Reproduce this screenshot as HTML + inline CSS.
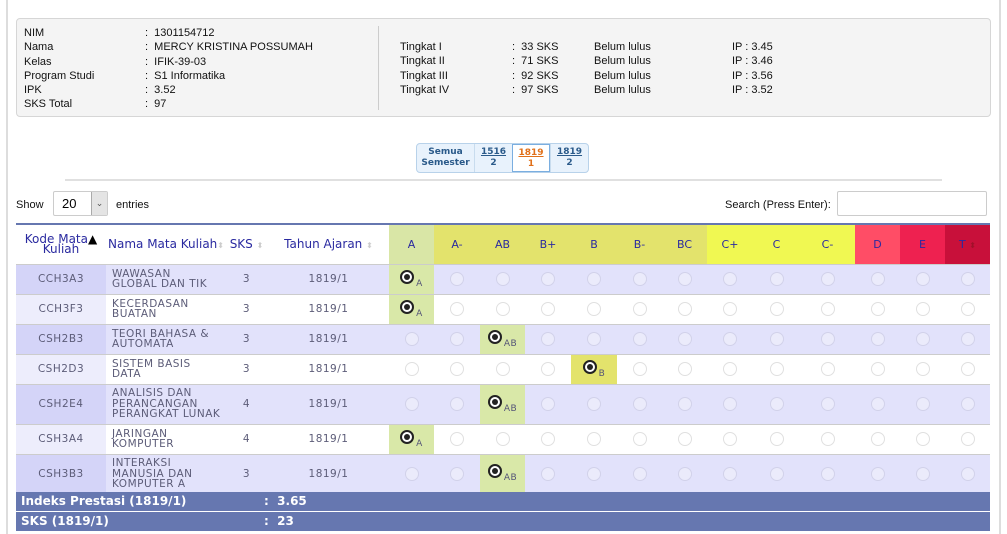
<!DOCTYPE html>
<html><head><meta charset="utf-8"><style>
*{margin:0;padding:0;box-sizing:border-box}
body{width:1007px;height:534px;background:#fff;position:relative;overflow:hidden;font-family:"Liberation Sans",Arial,sans-serif}
.vl{position:absolute;top:0;width:2px;height:534px;background:#ddd}
.info{position:absolute;left:16px;top:18px;width:975px;height:99px;background:#f4f4f4;border:1px solid #d6d6d6;border-radius:4px}
.t{position:absolute;font-size:11px;color:#111;line-height:14.3px;white-space:nowrap}
.sep{position:absolute;left:378px;top:26px;width:1px;height:84px;background:#ccc}
.tabs{position:absolute;left:416px;top:143px;height:30px;display:flex;border:1px solid #b8d2ea;border-radius:4px;background:#e8f2fc;font-family:"DejaVu Sans",Verdana,sans-serif;font-size:9px;font-weight:bold;color:#2a5a8a;text-align:center;line-height:11px}
.tabs div{padding:3px 0;border-left:1px solid #c8dcee}
.tabs div:first-child{border-left:none}
.hr{position:absolute;left:65px;top:179px;width:877px;height:2px;background:#e0e0e0}
.ctl{position:absolute;font-size:11px;color:#111}
table{position:absolute;left:16px;top:223px;width:974px;border-collapse:collapse;table-layout:fixed;font-family:"DejaVu Sans",Verdana,sans-serif}
thead th{height:40px;font-weight:normal;font-size:11px;color:#2a2aa0;border-top:2px solid #6677b0;text-align:center}
thead th.b{font-size:12px}
td{font-size:10.5px;color:#5c5c78;text-align:center;border-top:1px solid #ccc;letter-spacing:.5px;padding:0}
td.n{text-align:left;padding-left:6px;line-height:10.5px}
tr.o td{background:#e2e2fb}
tr.o td.k{background:#d4d4f8}
tr.e td{background:#fff}
tr.e td.k{background:#ededfc}
tr td.sa{background:#d9e8a8!important}
tr td.sb{background:#e3e36c!important}
.r{display:inline-block;width:14px;height:14px;border-radius:50%;background:#ebebfb;border:1px solid #d2d2ea;vertical-align:middle}
tr.e .r{background:#fff;border-color:#e0e0e0}
.s{display:inline-block;width:14px;height:14px;border-radius:50%;background:#fff;border:2px solid #222;vertical-align:middle;position:relative}
.s:after{content:"";position:absolute;left:2px;top:2px;width:6px;height:6px;border-radius:50%;background:#222}
.g{font-size:9px;color:#557;vertical-align:-6px;margin-left:2px}
.foot{position:absolute;left:16px;width:974px;height:19px;background:#6677b0;color:#fff;font-family:"DejaVu Sans",Verdana,sans-serif;font-weight:bold;font-size:12px;line-height:19px}
.foot span{position:absolute}
.arr{color:#ccc;font-size:8px}
</style></head><body>
<div class="vl" style="left:6px"></div><div class="vl" style="left:999px"></div>
<div class="info"></div>
<div class="t" style="left:24px;top:26px">NIM<br>Nama<br>Kelas<br>Program Studi<br>IPK<br>SKS Total</div>
<div class="t" style="left:145px;top:26px">:&nbsp; 1301154712<br>:&nbsp; MERCY KRISTINA POSSUMAH<br>:&nbsp; IFIK-39-03<br>:&nbsp; S1 Informatika<br>:&nbsp; 3.52<br>:&nbsp; 97</div>
<div class="sep"></div>
<div class="t" style="left:400px;top:40px">Tingkat I<br>Tingkat II<br>Tingkat III<br>Tingkat IV</div>
<div class="t" style="left:512px;top:40px">:&nbsp; 33 SKS<br>:&nbsp; 71 SKS<br>:&nbsp; 92 SKS<br>:&nbsp; 97 SKS</div>
<div class="t" style="left:594px;top:40px">Belum lulus<br>Belum lulus<br>Belum lulus<br>Belum lulus</div>
<div class="t" style="left:732px;top:40px">IP : 3.45<br>IP : 3.46<br>IP : 3.56<br>IP : 3.52</div>
<div class="tabs">
<div style="width:57px">Semua<br>Semester</div>
<div style="width:38px"><u>1516</u><br>2</div>
<div style="width:38px;background:#fff;border:1px solid #7aaee0;color:#e0701a"><u>1819</u><br>1</div>
<div style="width:38px"><u>1819</u><br>2</div>
</div>
<div class="hr"></div>
<div class="ctl" style="left:16px;top:199px">Show</div>
<div style="position:absolute;left:53px;top:191px;width:55px;height:25px;border:1px solid #ccc;border-radius:2px;font-size:13px;line-height:23px;padding-left:8px">20<span style="position:absolute;right:0;top:0;width:16px;height:23px;background:#e4e4e4;border-left:1px solid #aaa;font-size:9px;text-align:center;color:#555">&#8964;</span></div>
<div class="ctl" style="left:116px;top:199px">entries</div>
<div class="ctl" style="left:725px;top:199px">Search (Press Enter):</div>
<div style="position:absolute;left:837px;top:191px;width:150px;height:25px;border:1px solid #ccc;border-radius:2px"></div>
<table>
<colgroup><col style="width:90px"><col style="width:119px"><col style="width:43px"><col style="width:121px"><col style="width:45px"><col style="width:46px"><col style="width:45px"><col style="width:46px"><col style="width:46px"><col style="width:45px"><col style="width:45px"><col style="width:46px"><col style="width:47px"><col style="width:55px"><col style="width:45px"><col style="width:45px"><col style="width:45px"></colgroup>
<thead><tr>
<th class="b" style="line-height:10px">Kode Mata<span style="color:#000">▲</span><br>Kuliah</th>
<th class="b" style="text-align:left;padding-left:2px">Nama Mata Kuliah<span class="arr">⬍</span></th>
<th class="b">SKS <span class="arr">⬍</span></th>
<th class="b">Tahun Ajaran <span class="arr">⬍</span></th>
<th style="background:#d9e6a6">A</th><th style="background:#e3e36c">A-</th><th style="background:#e3e36c">AB</th><th style="background:#e3e36c">B+</th><th style="background:#e3e36c">B</th><th style="background:#e3e36c">B-</th><th style="background:#e3e36c">BC</th>
<th style="background:#f0f852">C+</th><th style="background:#f0f852">C</th><th style="background:#f0f852">C-</th>
<th style="background:#ff4d66">D</th><th style="background:#ee2150">E</th><th style="background:#c8103a">T <span style="color:#a0102a;font-size:8px">⬍</span></th>
</tr></thead>
<tbody>
<tr class="o" style="height:30px"><td class="k">CCH3A3</td><td class="n">WAWASAN<br>GLOBAL DAN TIK</td><td>3</td><td>1819/1</td><td class="sa"><span class="s"></span><span class="g">A</span></td><td><span class="r"></span></td><td><span class="r"></span></td><td><span class="r"></span></td><td><span class="r"></span></td><td><span class="r"></span></td><td><span class="r"></span></td><td><span class="r"></span></td><td><span class="r"></span></td><td><span class="r"></span></td><td><span class="r"></span></td><td><span class="r"></span></td><td><span class="r"></span></td></tr>
<tr class="e" style="height:30px"><td class="k">CCH3F3</td><td class="n">KECERDASAN<br>BUATAN</td><td>3</td><td>1819/1</td><td class="sa"><span class="s"></span><span class="g">A</span></td><td><span class="r"></span></td><td><span class="r"></span></td><td><span class="r"></span></td><td><span class="r"></span></td><td><span class="r"></span></td><td><span class="r"></span></td><td><span class="r"></span></td><td><span class="r"></span></td><td><span class="r"></span></td><td><span class="r"></span></td><td><span class="r"></span></td><td><span class="r"></span></td></tr>
<tr class="o" style="height:30px"><td class="k">CSH2B3</td><td class="n">TEORI BAHASA &amp;<br>AUTOMATA</td><td>3</td><td>1819/1</td><td><span class="r"></span></td><td><span class="r"></span></td><td class="sa"><span class="s"></span><span class="g">AB</span></td><td><span class="r"></span></td><td><span class="r"></span></td><td><span class="r"></span></td><td><span class="r"></span></td><td><span class="r"></span></td><td><span class="r"></span></td><td><span class="r"></span></td><td><span class="r"></span></td><td><span class="r"></span></td><td><span class="r"></span></td></tr>
<tr class="e" style="height:30px"><td class="k">CSH2D3</td><td class="n">SISTEM BASIS<br>DATA</td><td>3</td><td>1819/1</td><td><span class="r"></span></td><td><span class="r"></span></td><td><span class="r"></span></td><td><span class="r"></span></td><td class="sb"><span class="s"></span><span class="g">B</span></td><td><span class="r"></span></td><td><span class="r"></span></td><td><span class="r"></span></td><td><span class="r"></span></td><td><span class="r"></span></td><td><span class="r"></span></td><td><span class="r"></span></td><td><span class="r"></span></td></tr>
<tr class="o" style="height:40px"><td class="k">CSH2E4</td><td class="n">ANALISIS DAN<br>PERANCANGAN<br>PERANGKAT LUNAK</td><td>4</td><td>1819/1</td><td><span class="r"></span></td><td><span class="r"></span></td><td class="sa"><span class="s"></span><span class="g">AB</span></td><td><span class="r"></span></td><td><span class="r"></span></td><td><span class="r"></span></td><td><span class="r"></span></td><td><span class="r"></span></td><td><span class="r"></span></td><td><span class="r"></span></td><td><span class="r"></span></td><td><span class="r"></span></td><td><span class="r"></span></td></tr>
<tr class="e" style="height:30px"><td class="k">CSH3A4</td><td class="n">JARINGAN<br>KOMPUTER</td><td>4</td><td>1819/1</td><td class="sa"><span class="s"></span><span class="g">A</span></td><td><span class="r"></span></td><td><span class="r"></span></td><td><span class="r"></span></td><td><span class="r"></span></td><td><span class="r"></span></td><td><span class="r"></span></td><td><span class="r"></span></td><td><span class="r"></span></td><td><span class="r"></span></td><td><span class="r"></span></td><td><span class="r"></span></td><td><span class="r"></span></td></tr>
<tr class="o" style="height:39px"><td class="k">CSH3B3</td><td class="n">INTERAKSI<br>MANUSIA DAN<br>KOMPUTER A</td><td>3</td><td>1819/1</td><td><span class="r"></span></td><td><span class="r"></span></td><td class="sa"><span class="s"></span><span class="g">AB</span></td><td><span class="r"></span></td><td><span class="r"></span></td><td><span class="r"></span></td><td><span class="r"></span></td><td><span class="r"></span></td><td><span class="r"></span></td><td><span class="r"></span></td><td><span class="r"></span></td><td><span class="r"></span></td><td><span class="r"></span></td></tr>
</tbody>
</table>
<div class="foot" style="top:492px"><span style="left:5px">Indeks Prestasi (1819/1)</span><span style="left:248px">:&nbsp; 3.65</span></div>
<div class="foot" style="top:512px"><span style="left:5px">SKS (1819/1)</span><span style="left:248px">:&nbsp; 23</span></div>
</body></html>
